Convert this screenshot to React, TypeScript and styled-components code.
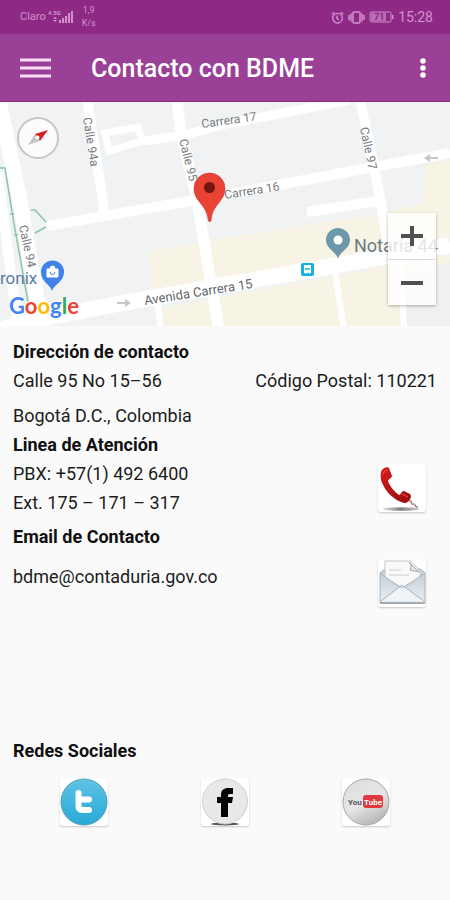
import React from "react";
import styled, { createGlobalStyle } from "styled-components";

const GlobalStyle = createGlobalStyle`
  *, *::before, *::after { box-sizing: border-box; }
  body {
    margin: 0;
    background: #fafafa;
    color: #1c1c1c;
    font-family: Roboto, "Liberation Sans", sans-serif;
  }
`;

const Screen = styled.div`
  display: flex;
  flex-direction: column;
  min-height: 100vh;
  background: #fafafa;
`;

const StatusBar = styled.div`
  display: flex;
  align-items: center;
  justify-content: space-between;
  height: 34px;
  padding: 0 17px 0 20px;
  background: #8e2a86;
  color: #d391cd;
`;

const StatusGroup = styled.div<{ $gap: number }>`
  display: flex;
  align-items: center;
  gap: ${(p) => p.$gap}px;
`;

const Carrier = styled.span`
  font-size: 11px;
  line-height: 16px;
`;

const Speed = styled.span`
  display: flex;
  flex-direction: column;
  align-items: center;
  margin-left: 6px;
  font-size: 9px;
  line-height: 13px;
`;

const Clock = styled.span`
  font-size: 14px;
  line-height: 16px;
`;

const AppBar = styled.header`
  display: flex;
  align-items: center;
  height: 68px;
  padding: 0 11px 0 12px;
  background: #9a4096;
  border-bottom: 1px solid #87307f;
  color: #fff;
`;

const IconButton = styled.button<{ $width: number }>`
  display: flex;
  align-items: center;
  justify-content: center;
  width: ${(p) => p.$width}px;
  height: 48px;
  padding: 0;
  border: 0;
  background: none;
  color: inherit;
  cursor: pointer;
`;

const Title = styled.h1`
  flex: 1;
  margin: 2px 0 0 32px;
  font-size: 25px;
  line-height: 32px;
  font-weight: 500;
`;

const MapPanel = styled.section`
  position: relative;
  height: 224px;
  overflow: hidden;
  background: #f0f2f4;
`;

const MapDrawing = styled.svg`
  display: block;
  width: 100%;
  height: 100%;
`;

const CompassButton = styled.button`
  position: absolute;
  top: 15px;
  left: 17px;
  width: 42px;
  height: 42px;
  padding: 0;
  border: 2px solid #c4c6c8;
  border-radius: 50%;
  background: #fcfcfc;
  cursor: pointer;
`;

const ZoomControls = styled.div`
  position: absolute;
  right: 14px;
  bottom: 21px;
  display: flex;
  flex-direction: column;
  width: 48px;
  background: rgba(255, 255, 255, 0.8);
  box-shadow: 0 1px 3px rgba(0, 0, 0, 0.3);
`;

const ZoomButton = styled.button`
  display: flex;
  align-items: center;
  justify-content: center;
  height: 46px;
  padding: 0;
  border: 0;
  background: none;
  color: #505050;
  cursor: pointer;

  & + & {
    border-top: 1px solid #dcdcdc;
  }
`;

const Details = styled.main`
  display: flex;
  flex-direction: column;
  padding: 11px 13px 24px;
`;

const Heading = styled.h2<{ $before?: number }>`
  margin: ${(p) => p.$before ?? 0}px 0 0;
  font-size: 18px;
  line-height: 29px;
  font-weight: 700;
  color: #101010;
`;

const Line = styled.p`
  margin: 0;
  font-size: 18px;
  line-height: 29px;
`;

const SplitRow = styled.div<{ $align?: string; $before?: number; $inset?: number }>`
  display: flex;
  justify-content: space-between;
  align-items: ${(p) => p.$align ?? "center"};
  margin-top: ${(p) => p.$before ?? 0}px;
  padding-right: ${(p) => p.$inset ?? 0}px;
`;

const City = styled(Line)`
  margin-top: 6px;
`;

const Email = styled(Line)`
  padding-top: 3px;
`;

const TileLink = styled.a`
  display: block;
  width: 48px;
  height: 48px;
  border-radius: 3px;
  background: #fff;
  box-shadow: 0 1px 2px rgba(0, 0, 0, 0.2);

  svg {
    display: block;
    width: 48px;
    height: 48px;
  }
`;

const SocialRow = styled.nav`
  display: grid;
  grid-template-columns: repeat(3, 1fr);
  justify-items: center;
  margin-top: 13px;
`;

const SignalIcon = () => (
  <svg width="26" height="14" viewBox="0 0 26 14" fill="currentColor" aria-hidden="true">
    <text x="0" y="5" fontSize="6" fontWeight="700">4.5G</text>
    <path d="M5 9l2-2 2 2zM5 10h4l-2 2zM11 10h2v3h-2zM14 8h2v5h-2zM17 6h2v7h-2zM20 3h2v10h-2zM23 1h2v12h-2z" />
  </svg>
);

const AlarmIcon = () => (
  <svg width="13" height="13" viewBox="0 0 13 13" fill="none" stroke="currentColor" strokeWidth="1.4" aria-hidden="true">
    <circle cx="6.5" cy="7.2" r="4.8" />
    <path d="M6 4.5v3l2 1.4M.7 3.2l2.6-2M12.3 3.2l-2.6-2" />
  </svg>
);

const VibrateIcon = () => (
  <svg width="17" height="13" viewBox="0 0 17 13" fill="none" stroke="currentColor" strokeWidth="1.5" aria-hidden="true">
    <rect x="5" y="1" width="7" height="11" rx="1" />
    <path d="M3 2.5v8M14 2.5v8M1 4v5M16 4v5" />
  </svg>
);

const BatteryIcon = () => (
  <svg width="25" height="12" viewBox="0 0 25 12" aria-hidden="true">
    <rect x="1" y="1" width="21" height="10" rx="1.5" fill="none" stroke="currentColor" />
    <rect x="2" y="2" width="15" height="8" fill="currentColor" opacity=".65" />
    <path d="M23 4h1.5v4H23z" fill="currentColor" />
    <text x="5" y="9.4" fontSize="9" fontWeight="700" fill="#8e2a86">71</text>
  </svg>
);

const StreetMap = () => (
  <MapDrawing viewBox="0 0 450 224" preserveAspectRatio="xMidYMid slice" role="img" aria-label="Mapa de la Calle 95 con Carrera 16">
    <rect width="450" height="224" fill="#f0f2f4" />
    <g fill="#f8f4e5">
      <path d="M149 149L197 141 208 183 151 192z" />
      <path d="M205 139L378 112 423 101 425 61 450 58V143L218 184z" />
      <path d="M163 206L450 152V224H166z" />
    </g>
    <path d="M408 170L450 160V224H404z" fill="#eef0f2" />
    <path d="M301 114V62L381 74 383 98z" fill="#f0f2f4" />
    <g fill="none" stroke="#fff">
      <path d="M-3 -10L19 94 42 224" strokeWidth="15" />
      <path d="M-2 70L8 150 18 224" strokeWidth="10" />
      <path d="M87 -3L97 60 105 114" strokeWidth="10" />
      <path d="M47 124L190 99 278 83 358 68 450 51" strokeWidth="10" />
      <path d="M143 39L180 34 226 22 350 -2" strokeWidth="9" />
      <path d="M105 31L138 25 142 39 109 49z" strokeWidth="7" />
      <path d="M177 -3L181 31 197 98 219 228" strokeWidth="11" />
      <path d="M360 -3L370 46 381 100 388 142" strokeWidth="10" />
      <path d="M307 110L378 99" strokeWidth="10" />
      <path d="M-5 229L50 215 123 201 213 185 305 169 450 143" strokeWidth="16" />
      <path d="M335 170L344 228M401 160L404 228M157 197L161 228" strokeWidth="6" />
    </g>
    <path d="M0 66H5L14 122 28 200M10 112H14M14 133H18M31 108H35L46 120M46 125L35 131" fill="none" stroke="#8bc7a1" strokeWidth="1.5" />
    <path d="M117 200h8v-3l6 4-6 4v-3h-8zM438 57h-8v3l-6-4 6-4v3h8z" fill="#c4c7cf" />
    <g fill="#777b80" fontSize="12">
      <text transform="translate(202 26) rotate(-8)">Carrera 17</text>
      <text transform="translate(225 97) rotate(-9)">Carrera 16</text>
      <text transform="translate(145 203) rotate(-9)" fontSize="13" fill="#63676b">Avenida Carrera 15</text>
      <text transform="translate(83 16) rotate(81)">Calle 94a</text>
      <text transform="translate(179 38) rotate(76)">Calle 95</text>
      <text transform="translate(360 26) rotate(78)">Calle 97</text>
      <text transform="translate(19 124) rotate(78)">Calle 94</text>
    </g>
    <text x="0" y="182" fontSize="17" fill="#587ca5">ronix</text>
    <path d="M52 189C50 182 41 180 41 170A11.500 11.500 0 0 1 64 170C64 180 54 182 52 189z" fill="#3f83e8" />
    <path d="M47 167h11v8H47zM50 167a2.500 3 0 0 1 5 0" fill="#fff" stroke="#fff" />
    <path d="M50 170a2.500 2.500 0 0 0 5 0" fill="none" stroke="#3f83e8" />
    <text x="9" y="212" fontSize="22" fontWeight="700" fontFamily="Lato, sans-serif" stroke="#fff" strokeWidth="2" paintOrder="stroke">
      <tspan fill="#4285f4">G</tspan>
      <tspan fill="#ea4335">o</tspan>
      <tspan fill="#fbbc05">o</tspan>
      <tspan fill="#4285f4">g</tspan>
      <tspan fill="#34a853">l</tspan>
      <tspan fill="#ea4335">e</tspan>
    </text>
    <path d="M338 157C336 149 326 147 326 138A12 12 0 0 1 350 138C350 147 340 149 338 157z" fill="#6c98a8" />
    <circle cx="338" cy="138" r="4.500" fill="#fff" />
    <text x="354" y="150" fontSize="18" fill="#697b82">Notaría 44</text>
    <rect x="301" y="161" width="13" height="13" rx="2" fill="#10b0e8" />
    <path d="M304 163h7v8h-1v1h-1v-1h-3v1h-1v-1h-1z" fill="#fff" />
    <path d="M305 167h5" stroke="#10b0e8" strokeWidth="1.500" />
    <path d="M208.500 119C207 102 194 100 194 86.500A15.500 15.500 0 0 1 225 86.500C225 100 212 102 211 119Q210 120 208.500 119z" fill="#e94335" stroke="#cf3226" strokeWidth=".6" />
    <circle cx="209.500" cy="85.500" r="5.500" fill="#731510" />
  </MapDrawing>
);

const PhoneIcon = () => (
  <svg viewBox="0 0 48 48" aria-hidden="true">
    <defs>
      <linearGradient id="handset" x1="0" y1="0" x2="1" y2="1">
        <stop offset="0" stopColor="#d51c1c" />
        <stop offset="1" stopColor="#970b0b" />
      </linearGradient>
      <linearGradient id="handsetShadow">
        <stop offset="0" stopColor="#ddd" />
        <stop offset=".5" stopColor="#808080" />
        <stop offset="1" stopColor="#ccc" />
      </linearGradient>
    </defs>
    <ellipse cx="23" cy="45" rx="18" ry="1.800" fill="url(#handsetShadow)" />
    <path d="M31 37c4-1 1 4 4 3s1 4 5 3" fill="none" stroke="#a86c6c" strokeWidth="1.300" />
    <path d="M3 6C4 2 10 0 11 2L14 10C14 12 10 13 10 15 12 21 17 26 21 29 23 29 23 25 26 25L32 28C35 31 30 37 27 37 14 35 0 18 3 6z" fill="url(#handset)" transform="translate(0 2)" />
    <path d="M5 10c1-3 3-4 5-4M24 30l6 3" fill="none" stroke="#e85a55" strokeWidth="1" />
  </svg>
);

const MailIcon = () => (
  <svg viewBox="0 0 48 48" aria-hidden="true">
    <defs>
      <linearGradient id="envelope" x1="0" y1="0" x2="0" y2="1">
        <stop offset="0" stopColor="#bfcbd6" />
        <stop offset="1" stopColor="#e9eff4" />
      </linearGradient>
    </defs>
    <path d="M2 14L7 10H42L47 14V44H2z" fill="url(#envelope)" stroke="#a8b0b7" />
    <path d="M7 2H33L42 12V19L24 30 7 19z" fill="#fafafa" stroke="#c5c5c5" />
    <path d="M31 3C34 6 33 8 32 11L41 13z" fill="#e3e6e8" stroke="#a4a7aa" />
    <path d="M11 11h12M11 16h20" stroke="#ccc" />
    <path d="M3 42L24 26 46 42" fill="#f0f4f7" stroke="#a6b2bd" />
    <path d="M3 15L24 29 46 15" fill="none" stroke="#aab5bf" />
    <path d="M2 44H47" stroke="#a3abb1" strokeWidth="2" />
  </svg>
);

const TwitterIcon = () => (
  <svg viewBox="0 0 48 48" aria-hidden="true">
    <defs>
      <linearGradient id="twitterDisc" x1="0" y1="0" x2="0" y2="1">
        <stop offset="0" stopColor="#61c3e4" />
        <stop offset=".6" stopColor="#3db3dc" />
        <stop offset="1" stopColor="#29a9d5" />
      </linearGradient>
    </defs>
    <circle cx="24" cy="24" r="23" fill="url(#twitterDisc)" stroke="#4e9eb8" />
    <path d="M18.500 15V28Q18.500 32 22.500 32H29M18.500 21.500H29" fill="none" stroke="#fff" strokeWidth="6" strokeLinecap="round" />
  </svg>
);

const FacebookIcon = () => (
  <svg viewBox="0 0 48 48" aria-hidden="true">
    <ellipse cx="24" cy="46" rx="14" ry="1.500" fill="#555" />
    <circle cx="24" cy="23.500" r="22.500" fill="#e8e8e8" stroke="#d0d0d0" />
    <path d="M20 39V25H16V19H20V17C20 12 23 10 27 10H32V16H29C27 16 27 17 27 19H32L31 25H27V39z" fill="#050505" />
  </svg>
);

const YoutubeIcon = () => (
  <svg viewBox="0 0 48 48" aria-hidden="true">
    <defs>
      <linearGradient id="youtubeDisc" x1="0" y1="0" x2=".5" y2="1">
        <stop offset="0" stopColor="#dcdcdc" />
        <stop offset=".6" stopColor="#e6e6e6" />
        <stop offset="1" stopColor="#bcbcbc" />
      </linearGradient>
    </defs>
    <circle cx="24" cy="24" r="23" fill="url(#youtubeDisc)" stroke="#a5a5a5" />
    <rect x="21" y="17" width="20" height="13" rx="3" fill="#e03a3e" />
    <g fontFamily="Roboto, sans-serif" fontSize="8" fontWeight="700">
      <text x="6" y="27" fill="#555">You</text>
      <text x="22" y="27" fill="#fff">Tube</text>
    </g>
  </svg>
);

export default function App() {
  return (
    <Screen>
      <GlobalStyle />
      <StatusBar>
        <StatusGroup $gap={2}>
          <Carrier>Claro</Carrier>
          <SignalIcon />
          <Speed>
            <span>1,9</span>
            <span>K/s</span>
          </Speed>
        </StatusGroup>
        <StatusGroup $gap={4}>
          <AlarmIcon />
          <VibrateIcon />
          <BatteryIcon />
          <Clock>15:28</Clock>
        </StatusGroup>
      </StatusBar>
      <AppBar>
        <IconButton type="button" $width={47} aria-label="Abrir menú">
          <svg width="31" height="20" viewBox="0 0 31 20" aria-hidden="true">
            <path d="M0 2H31M0 10H31M0 18H31" stroke="#f8def5" strokeWidth="3" />
          </svg>
        </IconButton>
        <Title>Contacto con BDME</Title>
        <IconButton type="button" $width={32} aria-label="Más opciones">
          <svg width="6" height="22" viewBox="0 0 6 22" fill="currentColor" aria-hidden="true">
            <circle cx="3" cy="4" r="2.800" />
            <circle cx="3" cy="11" r="2.800" />
            <circle cx="3" cy="18" r="2.800" />
          </svg>
        </IconButton>
      </AppBar>
      <MapPanel>
        <StreetMap />
        <CompassButton type="button" aria-label="Orientar el mapa al norte">
          <svg width="38" height="38" viewBox="0 0 38 38" aria-hidden="true">
            <path d="M29 11L16 15 21 22z" fill="#d91f26" />
            <path d="M9 26L16 15 21 22z" fill="#c3c8c3" />
            <circle cx="18.500" cy="18.500" r="2" fill="#fff" />
          </svg>
        </CompassButton>
        <ZoomControls>
          <ZoomButton type="button" aria-label="Acercar">
            <svg width="22" height="22" viewBox="0 0 22 22" aria-hidden="true">
              <path d="M0 11H22M11 1V21" stroke="currentColor" strokeWidth="4" />
            </svg>
          </ZoomButton>
          <ZoomButton type="button" aria-label="Alejar">
            <svg width="22" height="22" viewBox="0 0 22 22" aria-hidden="true">
              <path d="M0 11H22" stroke="currentColor" strokeWidth="4" />
            </svg>
          </ZoomButton>
        </ZoomControls>
      </MapPanel>
      <Details>
        <Heading>Dirección de contacto</Heading>
        <SplitRow>
          <Line>Calle 95 No 15–56</Line>
          <Line>Código Postal: 110221</Line>
        </SplitRow>
        <City>Bogotá D.C., Colombia</City>
        <Heading>Linea de Atención</Heading>
        <SplitRow $inset={11}>
          <div>
            <Line>PBX: +57(1) 492 6400</Line>
            <Line>Ext. 175 – 171 – 317</Line>
          </div>
          <TileLink href="tel:+5714926400" aria-label="Llamar">
            <PhoneIcon />
          </TileLink>
        </SplitRow>
        <Heading $before={5}>Email de Contacto</Heading>
        <SplitRow $align="flex-start" $before={8} $inset={11}>
          <Email>bdme@contaduria.gov.co</Email>
          <TileLink href="mailto:bdme@contaduria.gov.co" aria-label="Enviar correo">
            <MailIcon />
          </TileLink>
        </SplitRow>
        <Heading $before={129}>Redes Sociales</Heading>
        <SocialRow aria-label="Redes Sociales">
          <TileLink href="#twitter" aria-label="Twitter">
            <TwitterIcon />
          </TileLink>
          <TileLink href="#facebook" aria-label="Facebook">
            <FacebookIcon />
          </TileLink>
          <TileLink href="#youtube" aria-label="YouTube">
            <YoutubeIcon />
          </TileLink>
        </SocialRow>
      </Details>
    </Screen>
  );
}
